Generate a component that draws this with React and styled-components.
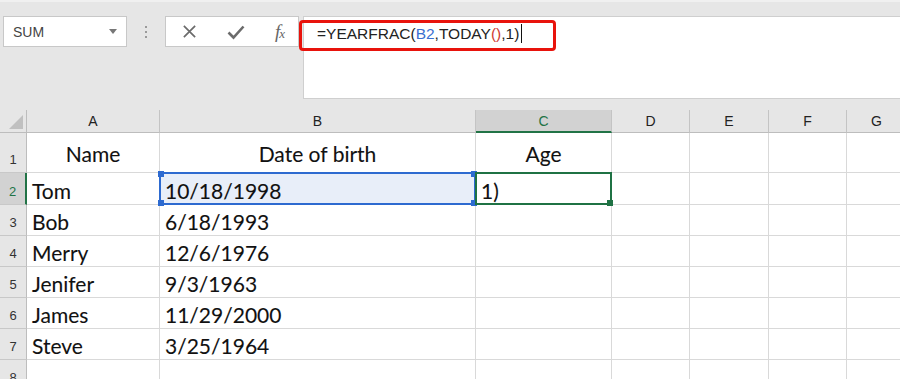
import React from 'react'
import styled, { createGlobalStyle, css } from 'styled-components'

const GlobalStyle = createGlobalStyle`
  html, body {
    margin: 0;
    padding: 0;
    background: #e6e6e6;
  }
  * {
    box-sizing: border-box;
  }
`

const COLS = [
  { key: 'A', width: 133 },
  { key: 'B', width: 316 },
  { key: 'C', width: 136, active: true },
  { key: 'D', width: 78 },
  { key: 'E', width: 79 },
  { key: 'F', width: 78 },
  { key: 'G', width: 60 },
]

const ROWS = [
  { cells: ['Name', 'Date of birth', 'Age'], head: true },
  { cells: ['Tom', '10/18/1998', '1)'], active: true },
  { cells: ['Bob', '6/18/1993', ''] },
  { cells: ['Merry', '12/6/1976', ''] },
  { cells: ['Jenifer', '9/3/1963', ''] },
  { cells: ['James', '11/29/2000', ''] },
  { cells: ['Steve', '3/25/1964', ''] },
  { cells: ['', '', ''] },
]

const Page = styled.div`
  width: 900px;
  height: 379px;
  overflow: hidden;
  background: #e6e6e6;
  border-top: 2px solid #f0f0f0;
`

const Toolbar = styled.div`
  display: flex;
  align-items: flex-start;
  padding: 14px 0 0 3px;
  height: 108px;
`

const NameBox = styled.div`
  width: 124px;
  height: 31px;
  background: #fff;
  border: 1px solid #c8c8c8;
  display: flex;
  align-items: center;
  justify-content: space-between;
  padding: 0 9px 0 9px;
  font-family: 'Liberation Sans', Arial, sans-serif;
  font-size: 14px;
  color: #444;
`

const Caret = styled.span`
  width: 0;
  height: 0;
  border-left: 4px solid transparent;
  border-right: 4px solid transparent;
  border-top: 5px solid #777;
`

const Grip = styled.div`
  width: 38px;
  height: 31px;
  display: flex;
  flex-direction: column;
  align-items: center;
  justify-content: center;
  gap: 3px;
  span {
    width: 2px;
    height: 2px;
    background: #9a9a9a;
  }
`

const IconBox = styled.div`
  width: 134px;
  height: 31px;
  background: #fff;
  border: 1px solid #c8c8c8;
  display: flex;
  align-items: center;
  justify-content: space-between;
  padding: 0 14px 0 16px;
  color: #6b6b6b;
`

const Fx = styled.span`
  font-family: 'Liberation Serif', 'Times New Roman', serif;
  font-style: italic;
  font-size: 19px;
  color: #666;
  letter-spacing: -1px;
  line-height: 1;
  sub {
    font-size: 13px;
    vertical-align: 0;
  }
`

const FormulaArea = styled.div`
  flex: 1;
  height: 83px;
  margin-left: 4px;
  background: #fff;
  border: 1px solid #cfcfcf;
  border-right: none;
  position: relative;
`

const Highlight = styled.div`
  position: absolute;
  left: -5px;
  top: 3px;
  width: 257px;
  height: 31px;
  border: 3px solid #e8130c;
  border-radius: 4px;
`

const FormulaText = styled.div`
  padding: 7px 0 0 13px;
  font-family: 'Liberation Sans', Arial, sans-serif;
  font-size: 15.5px;
  color: #222;
  display: flex;
  align-items: center;
`

const Ref = styled.span`
  color: ${p => p.$tone === 'blue' ? '#3a6fd0' : '#d03a32'};
`

const Cursor = styled.span`
  display: inline-block;
  width: 1px;
  height: 19px;
  background: #111;
  margin-left: 2px;
`

const Grid = styled.div`
  display: grid;
  grid-template-columns: 27px ${COLS.map(c => c.width + 'px').join(' ')};
  grid-template-rows: 23px 40px 32px repeat(6, 31px);
  background: #fff;
`

const Corner = styled.div`
  background: #e6e6e6;
  border-right: 1px solid #bdbdbd;
  border-bottom: 1px solid #bdbdbd;
  position: relative;
  &::after {
    content: '';
    position: absolute;
    right: 3px;
    bottom: 3px;
    width: 0;
    height: 0;
    border-left: 14px solid transparent;
    border-bottom: 14px solid #c0c0c0;
  }
`

const ColHead = styled.div`
  background: ${p => p.$active ? '#d2d2d2' : '#e6e6e6'};
  border-right: 1px solid #c4c4c4;
  border-bottom: ${p => p.$active ? '2px solid #217346' : '1px solid #bdbdbd'};
  display: flex;
  align-items: center;
  justify-content: center;
  padding-top: ${p => p.$active ? '1px' : '0'};
  font-family: 'Liberation Sans', Arial, sans-serif;
  font-size: 14px;
  color: ${p => p.$active ? '#217346' : '#222'};
`

const RowHead = styled.div`
  background: ${p => p.$active ? '#d2d2d2' : '#e6e6e6'};
  border-bottom: 1px solid #c8c8c8;
  border-right: ${p => p.$active ? '2px solid #217346' : '1px solid #bdbdbd'};
  display: flex;
  align-items: flex-end;
  justify-content: center;
  padding-bottom: 5px;
  font-family: 'Liberation Sans', Arial, sans-serif;
  font-size: 13px;
  color: ${p => p.$active ? '#217346' : '#333'};
`

const Cell = styled.div`
  position: relative;
  border-right: 1px solid #d9d9d9;
  border-bottom: 1px solid #d9d9d9;
  display: flex;
  align-items: flex-end;
  justify-content: ${p => p.$center ? 'center' : 'flex-start'};
  padding: 0 5px ${p => p.$center ? '6px' : '1px'};
  font-family: Lato, 'Noto Sans', sans-serif;
  font-size: 21px;
  color: #111;
  -webkit-text-stroke: 0.1px #111;
  white-space: nowrap;
  ${p => p.$range && css`
    background: #e8eef9;
  `}
`

const Handle = styled.span`
  position: absolute;
  width: 6px;
  height: 6px;
  background: ${p => p.$color};
  ${p => p.$top ? 'top: -3px;' : 'bottom: -3px;'}
  ${p => p.$left ? 'left: -3px;' : 'right: -3px;'}
`

const Outline = styled.span`
  position: absolute;
  left: -1px;
  top: -1px;
  right: -1px;
  bottom: -1px;
  border: 2px solid ${p => p.$color};
  pointer-events: none;
  z-index: 1;
`

function Selection({ color, handles }) {
  return (
    <Outline $color={color}>
      {handles.map(h => (
        <Handle key={h} $color={color} $top={h.includes('t')} $left={h.includes('l')} />
      ))}
    </Outline>
  )
}

function XIcon() {
  return (
    <svg width="15" height="15" viewBox="0 0 16 16">
      <path d="M2 2 L14 14 M14 2 L2 14" stroke="#6b6b6b" strokeWidth="1.8" fill="none" />
    </svg>
  )
}

function CheckIcon() {
  return (
    <svg width="18" height="16" viewBox="0 0 18 16">
      <path d="M1.5 8.5 L6.5 13.5 L16.5 2.5" stroke="#6b6b6b" strokeWidth="2.6" fill="none" />
    </svg>
  )
}

export default function App() {
  return (
    <Page>
      <GlobalStyle />
      <Toolbar>
        <NameBox>
          SUM
          <Caret />
        </NameBox>
        <Grip>
          <span /><span /><span />
        </Grip>
        <IconBox>
          <XIcon />
          <CheckIcon />
          <Fx>f<sub>x</sub></Fx>
        </IconBox>
        <FormulaArea>
          <Highlight />
          <FormulaText>
            =YEARFRAC(<Ref $tone="blue">B2</Ref>,TODAY<Ref>()</Ref>,1)<Cursor />
          </FormulaText>
        </FormulaArea>
      </Toolbar>
      <Grid>
        <Corner />
        {COLS.map(c => (
          <ColHead key={c.key} $active={c.active}>{c.key}</ColHead>
        ))}
        {ROWS.map((row, i) => (
          <React.Fragment key={i}>
            <RowHead $active={row.active}>{i + 1}</RowHead>
            {COLS.map((c, j) => (
              <Cell key={c.key} $center={row.head} $range={row.active && j === 1}>
                {row.cells[j] || ''}
                {row.active && j === 1 && (
                  <Selection color="#2d6ad0" handles={['tl', 'tr', 'bl', 'br']} />
                )}
                {row.active && j === 2 && (
                  <Selection color="#1f7244" handles={['br']} />
                )}
              </Cell>
            ))}
          </React.Fragment>
        ))}
      </Grid>
    </Page>
  )
}
